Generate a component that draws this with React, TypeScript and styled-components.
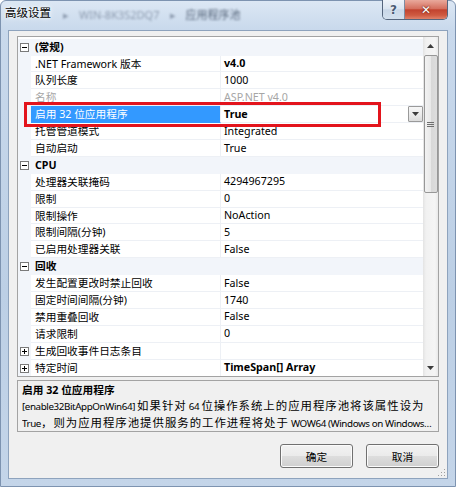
import styled, { createGlobalStyle } from "styled-components";

const ROW_H = 16.9;
const LINE = "#edf0f5";
const GUTTER = "#f2f5fa";

type Prop = {
  name: string;
  value?: string;
  bold?: boolean;
  dim?: boolean;
  selected?: boolean;
  collapsed?: boolean;
};

type Section = { title: string; props: Prop[] };

const SECTIONS: Section[] = [
  {
    title: "(常规)",
    props: [
      { name: ".NET Framework 版本", value: "v4.0", bold: true },
      { name: "队列长度", value: "1000" },
      { name: "名称", value: "ASP.NET v4.0", dim: true },
      { name: "启用 32 位应用程序", value: "True", bold: true, selected: true },
      { name: "托管管道模式", value: "Integrated" },
      { name: "自动启动", value: "True" },
    ],
  },
  {
    title: "CPU",
    props: [
      { name: "处理器关联掩码", value: "4294967295" },
      { name: "限制", value: "0" },
      { name: "限制操作", value: "NoAction" },
      { name: "限制间隔(分钟)", value: "5" },
      { name: "已启用处理器关联", value: "False" },
    ],
  },
  {
    title: "回收",
    props: [
      { name: "发生配置更改时禁止回收", value: "False" },
      { name: "固定时间间隔(分钟)", value: "1740" },
      { name: "禁用重叠回收", value: "False" },
      { name: "请求限制", value: "0" },
      { name: "生成回收事件日志条目", collapsed: true },
      { name: "特定时间", value: "TimeSpan[] Array", bold: true, collapsed: true },
    ],
  },
];

const GlobalStyle = createGlobalStyle`
  html, body {
    margin: 0;
    padding: 0;
    background: #ffffff;
  }
  body {
    font-family: "Noto Sans", "Noto Sans CJK SC", sans-serif;
    color: #000;
  }
`;

const Window = styled.div`
  width: 456px;
  height: 487px;
  box-sizing: border-box;
  display: flex;
  flex-direction: column;
  border: 1px solid #7d93b0;
  border-radius: 6px 6px 0 0;
  background: linear-gradient(180deg, #dce7f4 0px, #c9d9ec 28px, #bccfe5 60%, #c4d5e9 100%);
`;

const TitleBar = styled.div`
  height: 29px;
  display: flex;
  align-items: flex-start;
  padding-left: 4px;
`;

const Title = styled.div`
  margin-top: 5px;
  font-size: 11.5px;
  line-height: 14px;
  color: #000;
  text-shadow: 0 0 6px #ffffff, 0 0 3px #ffffff;
`;

const Crumbs = styled.div`
  margin: 7px 0 0 12px;
  display: flex;
  gap: 10px;
  font-size: 11px;
  line-height: 14px;
  filter: blur(1.3px);
`;

const Crumb = styled.span<{ $dark?: boolean }>`
  color: ${(p) => (p.$dark ? "#56657a" : "#8e9cb0")};
`;

const Caption = styled.div`
  margin-left: auto;
  margin-right: 7px;
  margin-top: -1px;
  display: flex;
  height: 19px;
  border: 1px solid #55657d;
  border-top: none;
  border-radius: 0 0 5px 5px;
  overflow: hidden;
`;

const CaptionButton = styled.div<{ $close?: boolean }>`
  width: ${(p) => (p.$close ? "42px" : "21px")};
  display: flex;
  align-items: center;
  justify-content: center;
  font-size: 12px;
  font-weight: bold;
  font-family: "DejaVu Sans", sans-serif;
  color: ${(p) => (p.$close ? "#ffffff" : "#4a5b73")};
  text-shadow: ${(p) => (p.$close ? "0 0 2px #6b1a10, 0 0 1px #6b1a10" : "0 0 2px #ffffff")};
  border-right: ${(p) => (p.$close ? "none" : "1px solid #7d8ca2")};
  background: ${(p) =>
    p.$close
      ? "linear-gradient(180deg, #e9a99c 0%, #d5705f 45%, #c2432f 52%, #cf5a41 80%, #e0826a 100%)"
      : "linear-gradient(180deg, #eef3f9 0%, #dbe5f1 45%, #c9d7e8 52%, #d3e0ee 100%)"};
`;

const Client = styled.div`
  flex: 1;
  position: relative;
  margin: 0 7px 7px 7px;
  display: flex;
  flex-direction: column;
  padding: 5px 8px 0 8px;
  background: #f0f0f0;
  border: 1px solid #8ea3bd;
  font-size: 10.7px;
`;

const Grid = styled.div`
  height: 341px;
  box-sizing: border-box;
  display: flex;
  border: 1px solid #a3a3a3;
  background: #ffffff;
`;

const List = styled.div`
  flex: 1;
  position: relative;
  overflow: hidden;
  padding-top: 1.7px;
`;

const Row = styled.div`
  display: flex;
  height: ${ROW_H}px;
  line-height: ${ROW_H}px;
`;

const Gutter = styled.div`
  width: 13px;
  flex: none;
  display: flex;
  align-items: center;
  padding-left: 2px;
  box-sizing: border-box;
  background: ${GUTTER};
`;

const CategoryName = styled.div`
  flex: 1;
  padding-left: 4px;
  font-weight: bold;
  background: ${GUTTER};
`;

const NameCell = styled.div<{ $selected?: boolean; $dim?: boolean }>`
  width: 190px;
  flex: none;
  box-sizing: border-box;
  padding-left: 4px;
  white-space: nowrap;
  overflow: hidden;
  border-right: 1px solid ${LINE};
  border-bottom: 1px solid ${(p) => (p.$selected ? "#3399ff" : LINE)};
  background: ${(p) => (p.$selected ? "#3399ff" : "#ffffff")};
  color: ${(p) => (p.$selected ? "#ffffff" : p.$dim ? "#a6a6a6" : "#000000")};
`;

const ValueCell = styled.div<{ $bold?: boolean; $dim?: boolean }>`
  flex: 1;
  display: flex;
  align-items: center;
  box-sizing: border-box;
  padding-left: 3px;
  white-space: nowrap;
  border-bottom: 1px solid ${LINE};
  font-weight: ${(p) => (p.$bold ? "bold" : "normal")};
  color: ${(p) => (p.$dim ? "#a6a6a6" : "#000000")};
`;

const DropButton = styled.span`
  margin-left: auto;
  width: 15px;
  height: 16px;
  box-sizing: border-box;
  display: flex;
  align-items: center;
  justify-content: center;
  border: 1px solid #9a9a9a;
  border-radius: 1px;
  background: linear-gradient(180deg, #f7f7f7 0%, #ececec 50%, #dcdcdc 100%);
`;

const Annotation = styled.div`
  position: absolute;
  left: 6px;
  top: 64.5px;
  width: 357px;
  height: 25px;
  box-sizing: border-box;
  border: 3px solid #e3141c;
  pointer-events: none;
`;

const ScrollBar = styled.div`
  width: 15px;
  flex: none;
  display: flex;
  flex-direction: column;
  align-items: center;
  background: linear-gradient(90deg, #e3e3e3 0%, #f1f1f1 20%, #f5f5f5 80%, #e9e9e9 100%);
`;

const Arrow = styled.div`
  height: 17px;
  width: 100%;
  display: flex;
  align-items: center;
  justify-content: center;
  flex: none;
`;

const Thumb = styled.div`
  width: 14px;
  height: 138px;
  margin-top: 1px;
  box-sizing: border-box;
  border: 1px solid #979797;
  border-radius: 2px;
  display: flex;
  align-items: center;
  justify-content: center;
  background: linear-gradient(90deg, #f2f2f2 0%, #e8e8e8 50%, #d8d8d8 51%, #dddddd 100%);
`;

const Track = styled.div`
  flex: 1;
`;

const Description = styled.div`
  margin-top: 3px;
  height: 52px;
  box-sizing: border-box;
  padding: 2px 4px 0 4px;
  border: 1px solid #a3a3a3;
  background: #f0f0f0;
  line-height: 15.4px;
`;

const DescTitle = styled.div`
  font-weight: bold;
`;

const DescLine = styled.div`
  font-size: 9.8px;
  letter-spacing: -0.4px;
  white-space: nowrap;
  overflow: hidden;
  text-overflow: ellipsis;
`;

const Han = styled.span`
  font-family: "Noto Sans CJK SC", sans-serif;
  font-size: 11.4px;
  letter-spacing: 1px;
`;

const Buttons = styled.div`
  margin-top: 12px;
  display: flex;
  justify-content: flex-end;
  gap: 13px;
`;

const Button = styled.div`
  width: 73px;
  height: 24px;
  box-sizing: border-box;
  display: flex;
  align-items: center;
  justify-content: center;
  border: 1px solid #707070;
  border-radius: 3px;
  box-shadow: inset 0 0 0 1px #fbfbfb;
  background: linear-gradient(180deg, #f2f2f2 0%, #ebebeb 48%, #dddddd 52%, #cfcfcf 100%);
`;

const Grip = styled.svg`
  position: absolute;
  right: 1px;
  bottom: 1px;
`;

const ExpandIcon = ({ open }: { open: boolean }) => (
  <svg width="9" height="9" viewBox="0 0 9 9">
    <rect x="0.5" y="0.5" width="8" height="8" fill="#ffffff" stroke="#7a7a7a" />
    <path d="M2 4.5h5" stroke="#000000" />
    {!open && <path d="M4.5 2v5" stroke="#000000" />}
  </svg>
);

const Triangle = ({ up }: { up?: boolean }) => (
  <svg width="7" height="4" viewBox="0 0 7 4">
    <path d={up ? "M0 4L3.5 0L7 4Z" : "M0 0L7 0L3.5 4Z"} fill="#3c3c3c" />
  </svg>
);

export default function App() {
  return (
    <>
      <GlobalStyle />
      <Window>
        <TitleBar>
          <Title>高级设置</Title>
          <Crumbs>
            <Crumb>▸</Crumb>
            <Crumb>WIN-8K3S2DQ7</Crumb>
            <Crumb>▸</Crumb>
            <Crumb $dark>应用程序池</Crumb>
          </Crumbs>
          <Caption>
            <CaptionButton>?</CaptionButton>
            <CaptionButton $close>✕</CaptionButton>
          </Caption>
        </TitleBar>
        <Client>
          <Grid>
            <List>
              {SECTIONS.map((section) => (
                <div key={section.title}>
                  <Row>
                    <Gutter>
                      <ExpandIcon open />
                    </Gutter>
                    <CategoryName>{section.title}</CategoryName>
                  </Row>
                  {section.props.map((prop) => (
                    <Row key={prop.name}>
                      <Gutter>{prop.collapsed && <ExpandIcon open={false} />}</Gutter>
                      <NameCell $selected={prop.selected} $dim={prop.dim}>
                        {prop.name}
                      </NameCell>
                      <ValueCell $bold={prop.bold} $dim={prop.dim}>
                        {prop.value}
                        {prop.selected && (
                          <DropButton>
                            <Triangle />
                          </DropButton>
                        )}
                      </ValueCell>
                    </Row>
                  ))}
                </div>
              ))}
              <Annotation />
            </List>
            <ScrollBar>
              <Arrow>
                <Triangle up />
              </Arrow>
              <Thumb>
                <svg width="7" height="7" viewBox="0 0 7 7">
                  <path d="M0 1.5h7M0 3.5h7M0 5.5h7" stroke="#6f6f6f" />
                </svg>
              </Thumb>
              <Track />
              <Arrow>
                <Triangle />
              </Arrow>
            </ScrollBar>
          </Grid>
          <Description>
            <DescTitle>启用 32 位应用程序</DescTitle>
            <DescLine>
              [enable32BitAppOnWin64] <Han>如果针对</Han> 64 <Han>位操作系统上的应用程序池将该属性设为</Han>
            </DescLine>
            <DescLine>
              True<Han>，则为应用程序池提供服务的工作进程将处于</Han> WOW64 (Windows on Windows64)
            </DescLine>
          </Description>
          <Buttons>
            <Button>确定</Button>
            <Button>取消</Button>
          </Buttons>
          <Grip width="9" height="9" viewBox="0 0 9 9">
            <path d="M7 1h1v1H7zM7 4h1v1H7zM4 4h1v1H4zM7 7h1v1H7zM4 7h1v1H4zM1 7h1v1H1z" fill="#a0a0a0" />
          </Grip>
        </Client>
      </Window>
    </>
  );
}
